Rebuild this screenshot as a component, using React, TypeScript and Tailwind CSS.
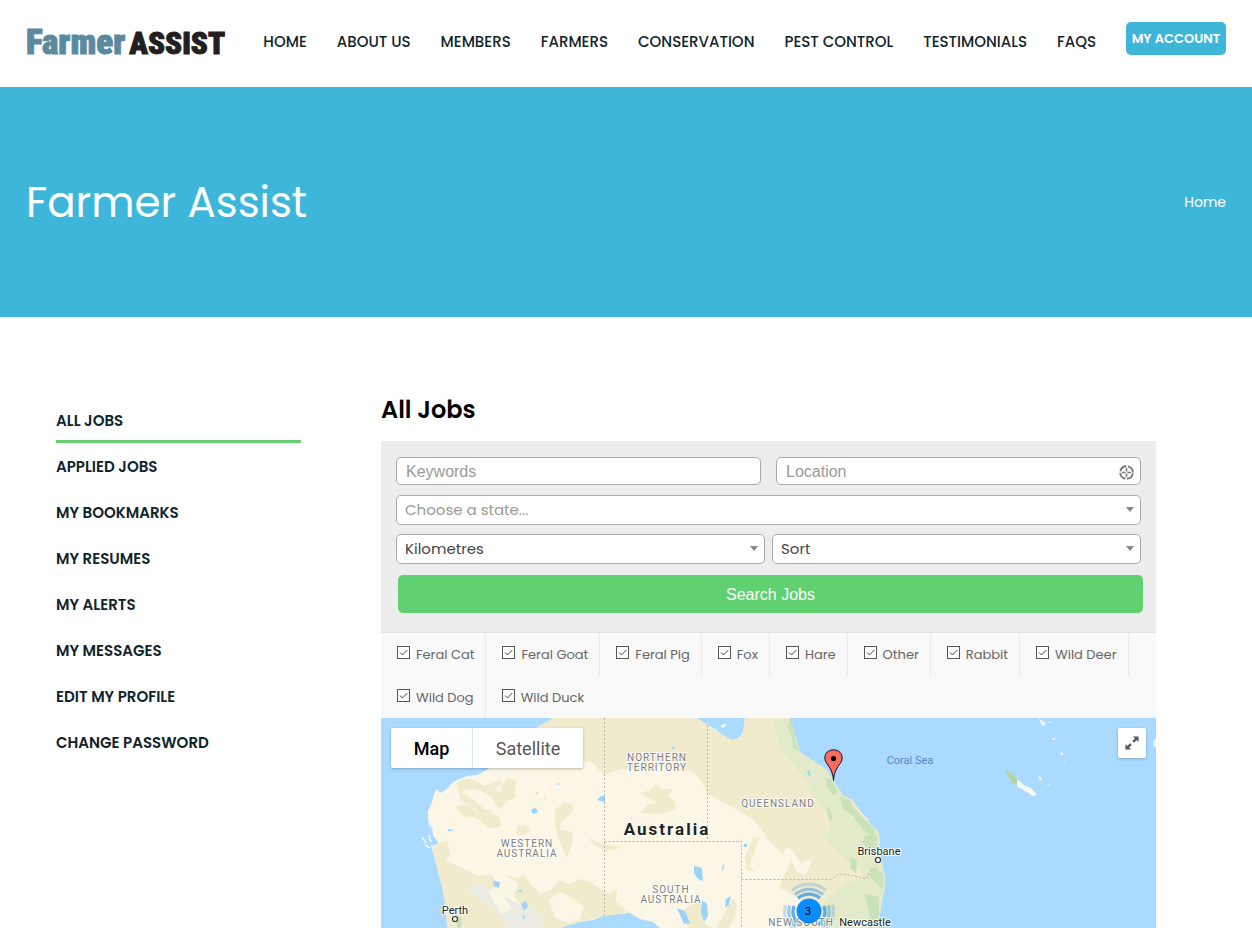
import React from "react";

const navItems = ["HOME", "ABOUT US", "MEMBERS", "FARMERS", "CONSERVATION", "PEST CONTROL", "TESTIMONIALS", "FAQS"];

const sideItems = [
  "ALL JOBS",
  "APPLIED JOBS",
  "MY BOOKMARKS",
  "MY RESUMES",
  "MY ALERTS",
  "MY MESSAGES",
  "EDIT MY PROFILE",
  "CHANGE PASSWORD",
];

const filters = ["Feral Cat", "Feral Goat", "Feral Pig", "Fox", "Hare", "Other", "Rabbit", "Wild Deer", "Wild Dog", "Wild Duck"];

function Header() {
  return (
    <header className="bg-white">
      <div className="mx-auto flex h-[87px] max-w-[1252px] items-center justify-between px-[26px] pb-1">
        <a href="#home" className="flex items-baseline gap-1 pt-1 font-['Roboto_Condensed','Liberation_Sans',sans-serif] leading-10 font-black">
          <span className="text-[35px] text-[#5b8aa0] [-webkit-text-stroke:1px_#5b8aa0]">Farmer</span>
          <span className="text-[31px] text-[#231f20] [-webkit-text-stroke:1px_#231f20]">ASSIST</span>
        </a>
        <nav className="flex items-center gap-[30px]">
          {navItems.map((item) => (
            <a key={item} href="#nav" className="text-[15px] leading-5 font-medium whitespace-nowrap text-[#10242b]">
              {item}
            </a>
          ))}
          <a href="#account" className="mb-1.5 flex h-[33px] w-[100px] items-center justify-center rounded-[5px] bg-[#3eb6da] text-[13px] font-semibold whitespace-nowrap text-white">
            MY ACCOUNT
          </a>
        </nav>
      </div>
    </header>
  );
}

function Banner() {
  return (
    <section className="bg-[#3eb6da] text-white">
      <div className="mx-auto flex h-[230px] max-w-[1252px] items-center justify-between px-[26px]">
        <h1 className="pt-0.5 text-[42px] leading-[52px] font-normal">Farmer Assist</h1>
        <a href="#home" className="text-[14px]">Home</a>
      </div>
    </section>
  );
}

function Sidebar() {
  return (
    <aside className="w-1/4 shrink-0 pt-20 pr-[25px] pl-[30px]">
      <ul>
        {sideItems.map((item, i) => (
          <li key={item}>
            <a
              href="#section"
              className={`flex h-[46px] items-center border-b-[3px] pt-1.5 text-[15px] font-semibold text-[#10242b] ${
                i === 0 ? "border-[#64cf72]" : "border-transparent"
              }`}
            >
              {item}
            </a>
          </li>
        ))}
      </ul>
    </aside>
  );
}

function SelectBox({ label, placeholder = false }: { label: string; placeholder?: boolean }) {
  return (
    <div className="relative flex-1">
      <select
        aria-label={label}
        className={`h-[30px] w-full appearance-none rounded-[5px] border border-[#aaa] bg-white px-2 text-[15px] ${
          placeholder ? "text-[#999]" : "text-[#444]"
        }`}
      >
        <option>{label}</option>
      </select>
      <svg className="pointer-events-none absolute top-3 right-1.5" width="9" height="5" viewBox="0 0 9 5" aria-hidden="true">
        <path d="M0 0h8L4 5z" fill="#888" />
      </svg>
    </div>
  );
}

const inputClass =
  "block h-7 w-full rounded-[5px] border border-[#aaa] bg-white px-[9px] pt-0.5 font-['Liberation_Sans',Arial,sans-serif] text-[16px] text-[#444] placeholder:text-[#999]";

function SearchForm() {
  return (
    <form className="bg-[#ededed] px-[15px] pt-4 pb-[19px]" onSubmit={(e) => e.preventDefault()}>
      <div className="grid grid-cols-2 gap-[15px]">
        <input aria-label="Keywords" placeholder="Keywords" className={inputClass} />
        <div className="relative">
          <input aria-label="Location" placeholder="Location" className={inputClass} />
          <button type="button" aria-label="Use my location" className="absolute top-2 right-[7px]">
            <svg width="15" height="15" viewBox="0 0 15 15" fill="none" stroke="#777" aria-hidden="true">
              <circle cx="7.500" cy="7.500" r="6.300" strokeWidth="1.900" strokeDasharray="8.300 1.600" strokeDashoffset="-0.800" />
              <path d="M7.500 3v3.500M7.500 8.500V12M3 7.500h3.500M8.500 7.500H12" strokeWidth="1.600" />
            </svg>
          </button>
        </div>
      </div>
      <div className="mt-2.5 flex">
        <SelectBox label="Choose a state..." placeholder />
      </div>
      <div className="mt-[9px] flex gap-[7px]">
        <SelectBox label="Kilometres" />
        <SelectBox label="Sort" />
      </div>
      <div className="mt-[11px] -mr-0.5 pl-0.5">
        <button type="submit" className="block h-[38px] w-full rounded-[5px] bg-[#61d070] pt-0.5 font-['Liberation_Sans',Arial,sans-serif] text-[16px] text-white">
          Search Jobs
        </button>
      </div>
    </form>
  );
}

function Filters() {
  return (
    <ul className="-mb-px flex flex-wrap border-t border-[#e3e3e3] bg-[#f9f9f9]">
      {filters.map((name, i) => (
        <li key={name} className={`flex h-[43px] items-center pr-[11px] pl-4 ${i < 9 ? "border-r border-[#eaeaea]" : ""}`}>
          <label className="flex items-center gap-1.5 text-[13px] leading-5 text-[#666]">
            <span className="relative mb-1 block h-[13px] w-[13px]">
              <input type="checkbox" defaultChecked className="peer block h-[13px] w-[13px] appearance-none border border-[#555] bg-white" />
              <svg className="pointer-events-none absolute inset-0 hidden peer-checked:block" width="13" height="13" viewBox="0 0 13 13" fill="none" stroke="#444" aria-hidden="true">
                <path d="M3 6.500l2.500 2.500L10.300 4" />
              </svg>
            </span>
            {name}
          </label>
        </li>
      ))}
    </ul>
  );
}

const LAND =
  "M172 0L165 7L158 8L151 13L140 22L125 40L109 50L96 57L86 58L72 64L66 71L59 75L56 71L53 76L51 84L47 93L47 101L51 109L52 117L57 124L56 129L50 127L54 142L61 163L63 178L66 187L68 196L66 210H179L188 207L199 204L212 202L222 198L237 196L249 195L259 201L272 204L279 210H497L500 184L504 170L503 159L499 151L500 140L497 128L498 115L489 105L486 100L476 92L471 82L463 78L457 75L452 62L448 58L446 52L432 44L425 40L419 34L415 27L414 17L409 5V0H364L362 14L358 20L351 22L344 20L339 15L334 11L327 7L320 5L316 0Z";

const OLIVE = [
  "M172 0H316L327 7L339 15L351 22L358 20L362 14L364 0H409L414 17L419 34L446 52L457 75L471 82L489 105L498 115L500 140L504 160L500 184L497 210H408L420 203L418 192L424 185L410 176L398 170L402 160L410 143L398 132L386 121L381 112L370 100L355 91L341 84L326 75L321 63L312 54L293 50L275 48L262 52L240 51L223 57L212 45L190 40L172 35L160 30L150 13Z",
  "M76 66C84 55 96 63 102 68L112 66L116 73C128 77 126 93 114 91L102 97C96 90 84 88 79 80Z",
  "M74 88L86 87L96 94L105 91L119 100L120 109L107 110L96 100L82 98Z",
  "M121 67L127 60L135 62L134 80L126 83L119 77Z",
  "M110 65L119 62L121 67L113 71Z",
  "M174 92L184 84L192 86L191 94L180 104L179 111L191 114L192 123L186 140L180 127L176 115L174 106Z",
  "M136 109L144 107L149 113L140 118L135 116Z",
  "M51 128L66 122L69 137L65 143L80 149L96 158L110 157L117 166L116 180L128 184L130 194L140 194L138 184L132 178L138 166L124 157L134 160L143 157L151 168L160 176L170 172L178 162L187 166L206 164L210 172L200 174L197 183L206 190L220 184L230 180L238 186L249 195L222 198L199 204L179 210H66L63 178L54 142Z",
  "M190 165L200 161L211 165L226 176L237 171L234 184L221 188L211 196L200 188Z",
  "M208 120L224 127L237 128L236 131L224 133L212 126Z",
  "M259 75L270 72L275 66L281 71L292 71L287 78L294 84L295 91L280 96L259 95L266 87L275 84Z",
  "M372 121L379 119L373 134L369 148L373 154L365 151L364 138Z",
  "M347 189L352 180L356 188L354 200L347 210H335Z",
  "M303 191L316 183L323 190L322 203L330 210H307Z",
];

const PALE = [
  "M80 74C92 66 108 75 114 84L119 92L103 91L93 82Z",
  "M405 129L412 133L420 145L431 141L428 150L424 157L416 154L410 143L401 138Z",
  "M168 181L180 174L192 180L203 189L198 202L187 205L174 200Z",
  "M107 173L118 168L124 181L132 190L120 196Z",
];

const GREEN = [
  "M409 0L414 17L419 34L446 52L452 62L463 78L476 92L498 115L500 140L504 165L497 210H448L437 198L444 182L455 173L470 163L482 160L478 148L464 141L446 121L450 105L442 89L431 77L425 62L412 46L401 34L395 18L392 3Z",
];

const DEEP = [
  "M409 0L413 10L415 27L419 33L412 30L411 20L407 11Z",
  "M445 60L451 62L456 73L453 78L446 69Z",
  "M459 79L469 82L474 92L486 103L494 112L493 119L482 112L472 98L462 90Z",
  "M485 117L496 118L496 128L489 134L481 124Z",
  "M491 150L502 155L503 172L495 165L489 158Z",
  "M484 176L498 179L498 198L494 210H486L489 198Z",
  "M445 86L452 98L449 106L447 98Z",
  "M470 139L476 143L475 156L469 150Z",
  "M75 196L81 200L80 210H76Z",
];

const LAKES = [
  "M216 82L220 78L224 78V84Z",
  "M151 91L155 90L157 94L153 96L150 94Z",
  "M154 74L157 75V77Z",
  "M67 111L72 112V113H67Z",
  "M112 163L119 164L118 170L113 168Z",
  "M313 148L321 150L322 163L317 161L313 155Z",
  "M296 190L304 193L309 205L303 206Z",
  "M321 182L326 186L327 198L323 204L320 194Z",
  "M345 181L350 178L348 187L344 190Z",
  "M341 149L344 146L341 154Z",
  "M363 126H366V129H363Z",
  "M290 31L294 27L293 31Z",
  "M426 53L428 52L430 57L428 58Z",
  "M140 186L145 183L147 188L143 193Z",
  "M141 198L144 197L143 202Z",
  "M137 172H141V174H138Z",
  "M164 78L165 80L164 82Z",
  "M175 66L178 65V67Z",
];

function RegionLabel({ x, y, lines }: { x: number; y: number; lines: string[] }) {
  return (
    <text x={x} y={y} textAnchor="middle" className="fill-[#7a7d80] stroke-white/80 text-[10px] tracking-[1px] [paint-order:stroke]" strokeWidth="2">
      {lines.map((line, i) => (
        <tspan key={line} x={x} dy={i === 0 ? 0 : 10}>
          {line}
        </tspan>
      ))}
    </text>
  );
}

function City({ x, y, cx, cy, name }: { x: number; y: number; cx?: number; cy?: number; name: string }) {
  return (
    <g>
      <text x={x} y={y} textAnchor="middle" className="fill-[#222] stroke-white/80 text-[11px] [paint-order:stroke]" strokeWidth="2">
        {name}
      </text>
      {cx !== undefined && <circle cx={cx} cy={cy} r="2.500" fill="#fff" stroke="#333" strokeWidth="1.200" />}
    </g>
  );
}

function JobsMap() {
  return (
    <div className="relative overflow-hidden bg-[#aadaff] font-['Roboto',sans-serif]">
      <svg className="block w-full" viewBox="0 0 775 210" role="img" aria-label="Map of job locations">
        <path d={LAND} fill="#fbf6e6" />
        {OLIVE.map((d) => <path key={d} d={d} fill="#f1ebcd" />)}
        <path d="M84 171L100 165L118 175L133 184L151 190L162 200L160 210H128L112 190Z" fill="#ebebe4" />
        {PALE.map((d) => <path key={d} d={d} fill="#fbf6e6" />)}
        {GREEN.map((d) => <path key={d} d={d} fill="#e2eaca" />)}
        {DEEP.map((d) => <path key={d} d={d} fill="#c9e2ba" />)}
        {LAKES.map((d) => <path key={d} d={d} fill="#9bd3fb" />)}

        <path d="M41 119l4 6M48 117l2 7M44 127l5 3M51 95l-3 8 2 7" stroke="#f5f8ee" strokeWidth="1.500" fill="none" />
        <path d="M339 8L343 6L346 7L342 10Z" fill="#f5f8ee" />
        <path d="M624 52L630 55L636 61V68L629 62Z" fill="#b8d49b" />
        <path d="M636 61L643 67L650 70L656 77L652 78L644 73L636 68Z" fill="#f7f7f3" />
        <path d="M657 0L665 5L662 9ZM667 3l4 1-2 1ZM671 20h3v2h-2ZM679 34l3 1v2h-2ZM682 42l2 2v2ZM657 58l3 1 1 3-2 1ZM666 66l4 1-3 1ZM775 20l-3 3 1 6h2ZM519 129l2 3-2 3Z" fill="#eef5f5" />

        <g fill="none" stroke="#b5b4aa" strokeDasharray="2 2">
          <path d="M223.500 0V198" />
          <path d="M223.500 123.500H360.500V210" />
          <path d="M326.500 7V123" />
          <path d="M360.500 161.500H450L457 156L470 157L485 161L490 152L497 150" />
        </g>

        <g fill="none" stroke="#2f95ea" strokeWidth="3.200">
          <path d="M417 180.300a16.700 16.700 0 0 1 22 0" opacity="0.75" />
          <path d="M414 176.500a21.500 21.500 0 0 1 28 0" opacity="0.45" />
          <path d="M411 172.500a26 26 0 0 1 34 0" opacity="0.25" />
          <path d="M413 188a16 16 0 0 0 6 19M443 188a16 16 0 0 1-6 19" opacity="0.75" />
          <path d="M408.500 187.500a20.500 20.500 0 0 0 6 21M447.500 187.500a20.500 20.500 0 0 1-6 21" opacity="0.45" />
          <path d="M404.500 187a25 25 0 0 0 6 23M451.500 187a25 25 0 0 1-6 23" opacity="0.25" />
        </g>

        <RegionLabel x={276} y={43} lines={["NORTHERN", "TERRITORY"]} />
        <RegionLabel x={397} y={89} lines={["QUEENSLAND"]} />
        <RegionLabel x={146} y={129} lines={["WESTERN", "AUSTRALIA"]} />
        <RegionLabel x={290} y={175} lines={["SOUTH", "AUSTRALIA"]} />
        <RegionLabel x={420} y={208} lines={["NEW SOUTH"]} />
        <text x="286" y="117" textAnchor="middle" className="fill-[#222] stroke-white/80 text-[17px] font-bold tracking-[2px] [paint-order:stroke]" strokeWidth="2">
          Australia
        </text>
        <text x="529" y="46" textAnchor="middle" className="fill-[#5487c9] text-[11px]">
          Coral Sea
        </text>
        <City x={74} y={196} cx={74} cy={201} name="Perth" />
        <City x={498} y={137} cx={497} cy={142} name="Brisbane" />
        <City x={484} y={208} name="Newcastle" />

        <circle cx="428" cy="193" r="12.500" fill="#0a8cff" />
        <text x="427" y="197" textAnchor="middle" className="fill-black text-[11px]">3</text>

        <path d="M452.500 62.500C452 54 448.500 49 445.800 45.500C441.500 39.500 444.500 31.800 452.500 31.800S463.500 39.500 459.200 45.500C456.500 49 453 54 452.500 62.500Z" fill="#fb6a61" stroke="#111" strokeWidth="1" />
        <circle cx="452.500" cy="40.500" r="2.600" fill="#000" />
      </svg>

      <div className="absolute top-2.5 left-2.5 flex rounded-[2px] bg-white text-[18px] shadow-[0_1px_3px_rgba(0,0,0,0.25)]">
        <button type="button" className="h-10 w-[82px] border-r border-[#d5e6f2] font-medium text-black">Map</button>
        <button type="button" className="h-10 w-[110px] text-[#565656]">Satellite</button>
      </div>
      <button type="button" aria-label="Toggle fullscreen" className="absolute top-2.5 right-2.5 flex h-[30px] w-7 items-center justify-center rounded-[2px] bg-white shadow-[0_1px_3px_rgba(0,0,0,0.25)]">
        <svg width="14" height="14" viewBox="0 0 14 14" fill="#555" aria-hidden="true">
          <path d="M8 0.500h5.500V6L11.600 4.100L9 6.700L7.300 5L9.900 2.400ZM6 13.500H0.500V8L2.400 9.900L5 7.300L6.700 9L4.100 11.600Z" />
        </svg>
      </button>
    </div>
  );
}

export default function App() {
  return (
    <div className="bg-white font-['Poppins','Inter',sans-serif]">
      <Header />
      <Banner />
      <div className="mx-auto flex max-w-[1252px] px-[26px]">
        <Sidebar />
        <main className="min-w-0 flex-1 pt-[77px] pr-[70px] pl-[55px]">
          <h2 className="mb-[15px] text-[24px] leading-8 font-semibold text-black">All Jobs</h2>
          <SearchForm />
          <Filters />
          <JobsMap />
        </main>
      </div>
    </div>
  );
}
